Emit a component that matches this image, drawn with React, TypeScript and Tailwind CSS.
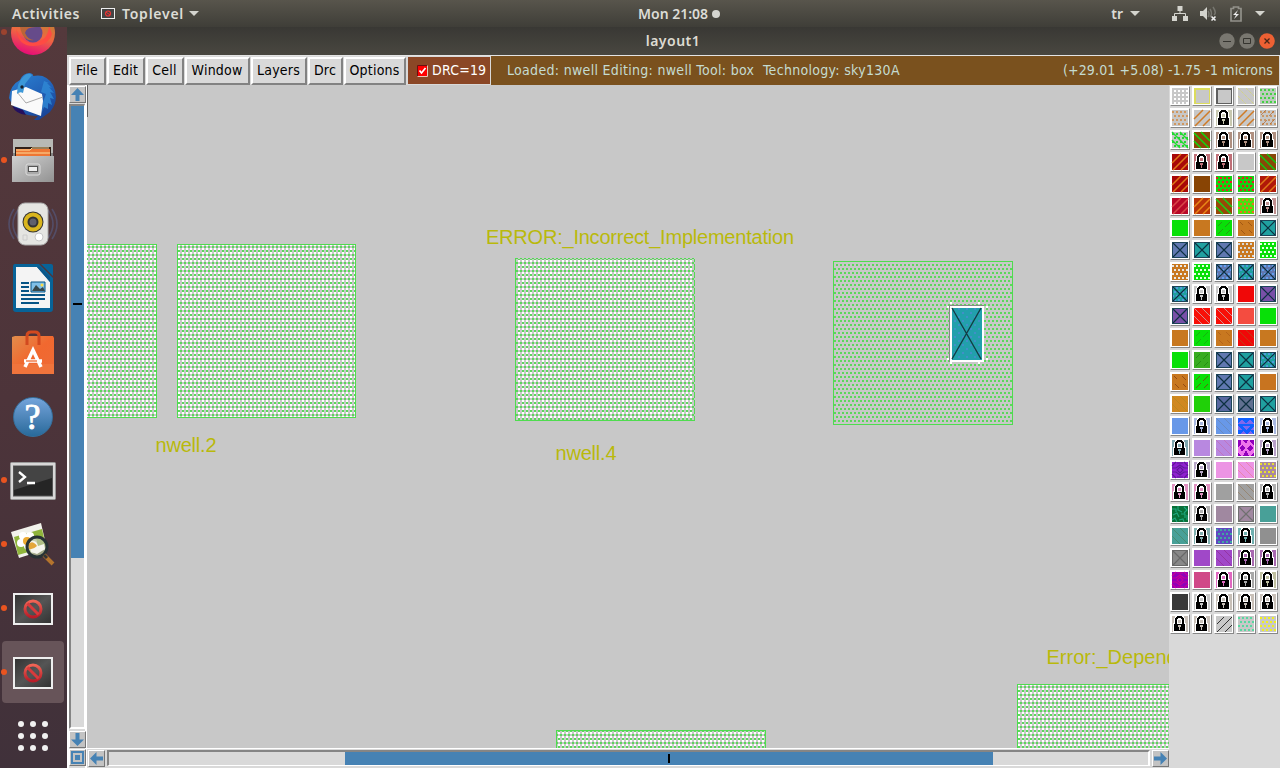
import React from 'react';

type Swatch = [kind: string, bg: string, fg?: string];

const G = '#c8c8c8', O = '#c87820', GR = '#08e008', BL = '#6078b0', TL = '#20a0a0', PU = '#7850a8';

const palette: Swatch[][] = [
  [['grid', G, '#fff'], ['outline', G, '#dcdc5c'], ['outline', G, '#606060'], ['faint', G, '#dcdc50'], ['dots', '#bccabc', '#44d044']],
  [['dots', G, '#d09860'], ['slash', G, '#cf7b27'], ['lock', '#c8c8b0'], ['slash', G, '#cf7b27'], ['dotslash', G, '#c89868']],
  [['dotback', G, '#20dc30'], ['back2', '#8c4808', '#10d810'], ['lock', '#b09080'], ['lock', '#b09080'], ['lock', '#b09080']],
  [['slash', '#a80808', '#e07818'], ['lock', '#c07078'], ['lock', '#c07078'], ['solid', G], ['back2', '#884808', '#10c810']],
  [['slash', '#a80808', '#e07818'], ['solid', '#884404'], ['dots', '#10d410', '#e82020'], ['dotslash', '#10d410', '#e02020'], ['slash', '#b01808', '#e07818']],
  [['slash', '#b80828', '#d84848'], ['slash', '#b83408', '#e88818'], ['back2', '#984808', '#18d018'], ['dots', '#48e010', '#e87020'], ['lock', '#c09090']],
  [['solid', GR], ['solid', O], ['dash', GR, '#308818'], ['dashback', O, '#985010'], ['cross', TL]],
  [['cross', BL], ['cross', TL], ['cross', BL], ['dots', O, '#d8d8d8'], ['dots', GR, '#e8ffe8']],
  [['dots', O, '#e8e8e8'], ['dots', GR, '#e0ffe0'], ['crossdots', BL, '#60a0f0'], ['crossdots', TL, '#509bdc'], ['crossdots', BL, '#60a0f0']],
  [['crossdots', TL, '#509bdc'], ['lock', G], ['lock', G], ['solid', '#f00808'], ['cross', PU]],
  [['cross', PU], ['back', '#f81008', '#c8b0b0'], ['back', '#f81008', '#c8b0b0'], ['solid', '#f44c40'], ['solid', GR]],
  [['solid', O], ['dash', GR, '#18a810'], ['dashback', O, '#b06018'], ['back', '#f00808', '#b84818'], ['solid', O]],
  [['solid', GR], ['dash', '#38ac20', '#208810'], ['cross', BL], ['cross', TL], ['crossdots', TL, '#509bdc']],
  [['dashback', O, '#884010'], ['dash', GR, '#784010'], ['cross', BL], ['cross', TL], ['solid', '#c87420']],
  [['back', '#d08820', '#b88820'], ['solid', '#20d008'], ['cross', '#5868a0'], ['cross', '#607090'], ['cross', TL]],
  [['solid', '#6898e8'], ['lock', '#a8b8e0'], ['back', '#6898e8', '#6888b8'], ['tri', '#1060ff', '#8068ec'], ['lock', '#a8b8e0']],
  [['lock', '#80a8b0'], ['solid', '#b888e0'], ['back', '#b888e0', '#c070b8'], ['tri2', '#f074ec', '#9000bc'], ['lock', '#b8a0c8']],
  [['mesh', '#9020d0', '#601898'], ['lock', '#b8a8c8'], ['solid', '#ec94e4'], ['back', '#ec94e4', '#e880a0'], ['dots', '#a888a0', '#e8e030']],
  [['lock', '#e090c0'], ['lock', '#e090c0'], ['solid', '#a0a0a0'], ['back', '#a0a0a0', '#948068'], ['lock', '#b0b0b0']],
  [['weave', '#087038', '#20a880'], ['lock', '#b0b0b0'], ['solid', '#a088a0'], ['crossgray', '#a088a0', '#707070'], ['solid', '#48a098']],
  [['back', '#48a098', '#488868'], ['lock', '#80b0b0'], ['dots', '#6048c0', '#40a8a0'], ['lock', '#70b0b0'], ['solid', '#909090']],
  [['crossgray', '#888888', '#686868'], ['solid', '#a048c8'], ['back', '#a048c8', '#903098'], ['lock', '#a868b0'], ['lock', '#a868b0']],
  [['mesh', '#9000b8', '#c80098'], ['solid', '#d04888'], ['lock', '#e068c0'], ['lock', '#a8a8a8'], ['lock', '#c0c0a0']],
  [['solid', '#383838'], ['lock', G], ['lock', '#c8c0b8'], ['lock', '#c8c0b8'], ['lock', '#c8c0b8']],
  [['lock', '#c8c0b8'], ['lock', '#c8c0b8'], ['thin', G, '#202020'], ['dots', G, '#58d8a0'], ['dots', G, '#f0f020']],
];

const dotCells: [number, number][] = [];
for (let r = 0; r < 4; r++) for (let c = 0; c < 4; c++) dotCells.push([c * 4 + (r % 2 ? 2 : 0), r * 4 + 1]);

function Dots({ fg }: { fg?: string }) {
  return <>{dotCells.map(([x, y]) => <rect key={`${x}-${y}`} x={x} y={y} width="2" height="2" fill={fg} />)}</>;
}

function Pattern({ kind, bg, fg }: { kind: string; bg: string; fg?: string }) {
  switch (kind) {
    case 'grid':
      return <>{[2, 6, 10, 14].map(y => [2, 6, 10, 14].map(x => <rect key={`${x}-${y}`} x={x} y={y} width="2" height="2" fill={fg} />))}</>;
    case 'outline':
      return <rect x=".75" y=".75" width="14.5" height="14.5" fill="none" stroke={fg} strokeWidth="1.5" />;
    case 'slash':
      return <path d="M0 9 9 0M1 16 16 1M9 16 16 9" stroke={fg} strokeWidth="1.5" shapeRendering="auto" />;
    case 'thin':
      return <path d="M1 8 8 1M1 16 16 1M9 16 16 9" stroke={fg} strokeWidth=".9" shapeRendering="auto" />;
    case 'back':
      return <path d="M8 0 16 8M0 0 16 16M0 8 8 16" stroke={fg} strokeWidth=".8" shapeRendering="auto" />;
    case 'faint':
      return <path d="M8 0 16 8M0 0 16 16M0 8 8 16" stroke={fg} strokeWidth=".8" strokeDasharray="1 1" shapeRendering="auto" />;
    case 'back2':
      return <path d="M7 0 16 9M0 1 15 16M0 9 7 16" stroke={fg} strokeWidth="1.5" shapeRendering="auto" />;
    case 'dash':
      return <path d="M2 6 6 2M9 7 14 2M2 14 7 9M10 14 14 10" stroke={fg} strokeWidth=".8" shapeRendering="auto" />;
    case 'dashback':
      return <path d="M2 2 5 5M10 2 14 6M3 10 7 14M11 10 14 13" stroke={fg} strokeWidth=".8" shapeRendering="auto" />;
    case 'dots':
      return <Dots fg={fg} />;
    case 'dotslash':
      return <><Dots fg={fg} /><path d="M1 5 6 0M9 6 14 1M2 15 7 10M10 14 15 9" stroke="#b05818" strokeWidth=".6" shapeRendering="auto" /></>;
    case 'dotback':
      return <><Dots fg={fg} /><path d="M0 0 16 16M8 0 16 8M0 8 8 16" stroke={fg} strokeWidth="1.4" shapeRendering="auto" /></>;
    case 'cross':
    case 'crossdots':
    case 'crossgray':
      return (
        <>
          {kind === 'crossdots' && <Dots fg={fg} />}
          <path d="M1 1 15 15M15 1 1 15" stroke={kind === 'crossgray' ? fg : '#0c3040'} strokeWidth="1.2" shapeRendering="auto" />
          <path d="M.5 .5h15v15H.5z" fill="none" stroke={kind === 'crossgray' ? fg : '#1c4458'} />
        </>
      );
    case 'tri':
      return <path d="M0 6 4 1 8 6zM8 6 12 1 16 6zM4 8h8l-4 4zM0 8l4 4H0zM16 8l-4 4h4zM2 16l3-3 3 3zM9 16l3-3 3 3z" fill={fg} />;
    case 'tri2':
      return <path d="M0 0h3v4L0 7zM5 0h5L8 4zM12 0h4v5l-3-2zM4 5l3 3-3 4-2-4zM12 5l3 3-3 4-3-4zM0 12l3 4H0zM8 10l3 6H5zM16 12v4h-3z" fill={fg} />;
    case 'mesh':
      return <path d="M0 4 4 0M12 0l4 4M5 1h6M0 6h4l4-3 4 3h4M8 5l3 3-3 3-3-3zM0 10h4l4 3 4-3h4M0 12l4 4M16 12l-4 4M5 15h6" fill="none" stroke={fg} strokeWidth="1.1" shapeRendering="auto" />;
    case 'weave':
      return <path d="M0 3h4v3M6 0v4l4 2M12 1l3 3-3 3M1 9l4-2 2 4M9 8h4v4M0 14l3-2 2 4M7 14l4-1 1 3M15 9v5" fill="none" stroke={fg} strokeWidth="1.1" shapeRendering="auto" />;
    case 'lock':
      return (
        <>
          <path d="M2 7V2H3V0H5V-1H10V0H12V2H13V7H14V16H1V7z" fill="#fff" />
          <path d="M5 0H10V1H11V2H12V8H10V3H9V2H6V3H5V8H3V2H4V1H5z" fill="#000" />
          <path d="M6 4H9V7H6z" fill={bg} />
          <rect x="2" y="8" width="11" height="7" fill="#000" />
          <path d="M6 9h3v2H8v3H7v-3H6z" fill={bg} />
        </>
      );
    default:
      return null;
  }
}

function PaletteCell({ item }: { item: Swatch }) {
  const [kind, bg, fg] = item;
  return (
    <div className="h-[20px] w-[20px] border border-white border-r-[#888] border-b-[#888] bg-white p-px">
      <svg width="16" height="16" viewBox="0 0 16 16" className="block overflow-visible" shapeRendering="crispEdges">
        <rect width="16" height="16" fill={bg} />
        <Pattern kind={kind} bg={bg} fg={fg} />
      </svg>
    </div>
  );
}

const menus: [string, string][] = [
  ['File', 'w-[37px]'], ['Edit', 'w-[38px]'], ['Cell', 'w-[38px]'], ['Window', 'w-[65px]'],
  ['Layers', 'w-[56px]'], ['Drc', 'w-[35px]'], ['Options', 'w-[62px]'],
];

function MenuBar() {
  return (
    <div className="flex h-[30px] shrink-0 border-t border-[#e4e4e4] bg-[#d9d9d9] pl-[2px] pr-px font-['DejaVu_Sans_Condensed','DejaVu_Sans',sans-serif] text-[14px] font-stretch-condensed whitespace-pre">
      <div className="flex gap-px pr-px pt-px">
        {menus.map(([label, w]) => (
          <button key={label} className={`${w} flex h-[28px] justify-center border-2 border-white border-r-[#828282] border-b-[#828282] bg-[#d9d9d9] pr-px leading-[22px] tracking-[0.2px] text-black`}>{label}</button>
        ))}
      </div>
      <div className="flex w-[84px] shrink-0 items-center border border-[#d9d9d9] bg-[#8b4726] pl-[9px] text-white">
        <svg width="11" height="12" viewBox="0 0 11 12" className="mr-[4px] shrink-0">
          <path d="M.5 11.5V.5h10" fill="none" stroke="#6c1010" /><path d="M1 1h9v10H1z" fill="#f00" />
          <path d="M10.5 .5v11H.5" fill="none" stroke="#e8c8b8" /><path d="m2.5 5.5 2 2.5 4-5" fill="none" stroke="#fff" strokeWidth="1.7" />
        </svg>
        <span className="tracking-[0.2px]">DRC=19</span>
      </div>
      <div className="flex flex-1 items-center justify-between bg-[#7a511e] pl-[16px] pr-[6px] text-[#c5dcd1]">
        <span className="tracking-[0.31px]">Loaded: nwell Editing: nwell Tool: box  Technology: sky130A</span>
        <span className="tracking-[0.13px]">(+29.01 +5.08) -1.75 -1 microns</span>
      </div>
    </div>
  );
}

function ScrollButton({ d }: { d: string }) {
  return (
    <div className="h-[17px] w-[17px] shrink-0 border border-white border-r-[#777] border-b-[#777] bg-[#c3c3c3]">
      <svg width="15" height="15" viewBox="0 0 15 15"><path d={d} fill="#4682b4" fillRule="evenodd" /></svg>
    </div>
  );
}

const UP = 'M7.5 1 14 8H9.5v6h-4V8H1z';
const DOWN = 'M7.5 14 1 7.5h4.5V1h4v6.5H14z';
const LEFT = 'M1 7.5 7.5 1v4.5H14v4H7.5V14z';
const RIGHT = 'M14 7.5 7.5 1v4.5H1v4h6.5V14z';
const HOME = 'M1 1h13v13H1zM3 3v9h9V3zM5 5h5v5H5z';

function Viewport() {
  const label = { fill: '#b9b90b', fontSize: 20, fontFamily: '"Liberation Sans", Arial, sans-serif' };
  return (
    <svg width="1082" height="663" viewBox="87 85 1082 663" className="block bg-[#c8c8c8]">
      <defs>
        <pattern id="well" width="4" height="8" x="2" y="0" patternUnits="userSpaceOnUse">
          <path d="M0 0h2v2H0zM0 4h2v2H0z" fill="#fff" />
          <path d="M0 2h2v2H0zM2 6h2v2H2z" fill="#5bd75b" />
        </pattern>
        <pattern id="diff" width="4" height="8" x="0" y="0" patternUnits="userSpaceOnUse">
          <path d="M0 0h2v2H0zM2 4h2v2H2z" fill="#5bd75b" />
        </pattern>
        <pattern id="metal" width="8" height="8" x="2" y="0" patternUnits="userSpaceOnUse">
          <path d="M0 0h2v2H0zM4 4h2v2H4z" fill="#4090c8" />
        </pattern>
      </defs>
      <g stroke="#4fdc4f" shapeRendering="crispEdges">
        <rect x="70.5" y="244.5" width="86" height="173" fill="url(#well)" />
        <rect x="177.5" y="244.5" width="178" height="173" fill="url(#well)" />
        <rect x="515.5" y="258.5" width="179" height="162" fill="url(#well)" strokeDasharray="2 2" />
        <path d="M515.5 258V421M515 420.5H695" />
        <rect x="556.5" y="730.5" width="209" height="40" fill="url(#well)" />
        <rect x="1017.5" y="684.5" width="190" height="90" fill="url(#well)" />
        <rect x="833.5" y="261.5" width="179" height="163" fill="url(#diff)" />
      </g>
      <path d="M87.5 85v32" stroke="#606060" />
      <g shapeRendering="crispEdges">
        <path d="M949.5 362V305.5H984" fill="none" stroke="#888" />
        <rect x="951" y="307" width="32" height="54" fill="#22a0ac" stroke="#fff" strokeWidth="2" />
        <rect x="952" y="308" width="30" height="52" fill="url(#metal)" />
        <path d="M950 303h2M978 303h2M947 307h2M986 307h2M947 359h2M986 359h2M950 363h2M978 363h2" stroke="#fff" strokeWidth="2" />
      </g>
      <path d="m952 308 29 51M981 308l-29 51" stroke="#123e44" strokeWidth="1.4" />
      <text x="486" y="243.5" textLength="308" {...label}>ERROR:_Incorrect_Implementation</text>
      <text x="155.5" y="452" textLength="61" {...label}>nwell.2</text>
      <text x="555.5" y="460" textLength="61" {...label}>nwell.4</text>
      <text x="1046.5" y="664" {...label}>Error:_Depend</text>
    </svg>
  );
}

function Prohibited() {
  return (
    <svg width="42" height="34" viewBox="0 0 42 34">
      <defs>
        <linearGradient id="panel" x2="1" y2="1"><stop stopColor="#333" /><stop offset=".5" stopColor="#555" /><stop offset="1" stopColor="#333" /></linearGradient>
        <linearGradient id="ban" x2="0" y2="1"><stop stopColor="#f06455" /><stop offset="1" stopColor="#b81c28" /></linearGradient>
      </defs>
      <rect x="1" y="1" width="40" height="32" fill="#eee" /><rect x="3" y="3" width="36" height="28" fill="url(#panel)" />
      <circle cx="21" cy="17" r="8" fill="none" stroke="url(#ban)" strokeWidth="3" /><path d="m15.5 11.5 11 11" stroke="#d83a3c" strokeWidth="3" />
    </svg>
  );
}

const Firefox = () => (
  <svg width="48" height="48" viewBox="0 0 48 48">
    <defs><linearGradient id="fox" x1=".7" x2=".4" y2="1"><stop stopColor="#a58a30" /><stop offset=".55" stopColor="#ef6840" /><stop offset="1" stopColor="#e60b78" /></linearGradient></defs>
    <circle cx="24" cy="24" r="22" fill="url(#fox)" /><path d="M7 20q6 15 18 14 14-2 15-17l3 8q-4 12-19 12Q9 37 7 20" fill="#ff4b43" /><circle cx="24" cy="24" r="9.5" fill="#664b8a" /><path d="M11 18q8-5 16 0-10 0-11 6 3 7 9 7-11 2-14-13" fill="#ba6538" />
  </svg>
);
const Thunderbird = () => (
  <svg width="50" height="50" viewBox="0 0 50 50">
    <defs><linearGradient id="bird" x1=".2" x2=".8" y2="1"><stop stopColor="#2a7fd0" /><stop offset=".5" stopColor="#2262b8" /><stop offset="1" stopColor="#173f92" /></linearGradient></defs>
    <path d="M1 26Q2 13 12 8 15 1 22 1 26 2 25 4 38 1 45 13 52 28 42 40L31 48l-5 0 4-4Q8 44 1 26" fill="url(#bird)" />
    <path d="M36 9l5 2-2 0 5 5-3-1 5 6-4-1 4 7-4-1 2 7-4-2 0 6-4-2-2 5 1-10 3-8-5-2z" fill="#2f8ad6" opacity=".8" />
    <path d="M4 19 18 15l16 7 1 7-2 15L3 33z" fill="#fafafa" /><path d="m9 20 9 11 17-6" fill="none" stroke="#aaa" />
    <path d="M9 22q0-12 7-18Q20 0 24 3L17 12l-2 9q-3-2-6 1" fill="#3c98d8" /><circle cx="14" cy="15" r="1.7" fill="#18202c" />
    <path d="M4 34 15 38l3 5Q8 42 4 34" fill="#24105e" />
  </svg>
);
const Files = () => (
  <svg width="44" height="46" viewBox="0 0 44 46">
    <defs><linearGradient id="cab" x2="1" y2="1"><stop stopColor="#d0d0d0" /><stop offset="1" stopColor="#929292" /></linearGradient></defs>
    <path d="M2 2h40v41H2z" fill="#858585" /><path d="M2 1h40v14H2z" fill="#b8b9b5" /><path d="M4 9h36v10H4z" fill="#302018" /><path d="M5 11h34v8H5z" fill="#ee7634" /><path d="M5 12h14l2-2h17M5 15h34" stroke="#ffdc99" fill="none" /><path d="M1 18h42v26H1z" fill="url(#cab)" />
    <rect x="15" y="26" width="14" height="11" rx="2" fill="#aaa" stroke="#ddd" /><rect x="17.5" y="28.5" width="9" height="5" fill="#eee" stroke="#555" />
  </svg>
);
const Rhythmbox = () => (
  <svg width="50" height="48" viewBox="0 0 50 48">
    <path d="M10 10Q0 24 10 38M6 9Q-4 24 6 39M40 10q10 14 0 28M44 9q10 15 0 30" fill="none" stroke="#56618d" strokeWidth="1.6" opacity=".55" />
    <rect x="10" y="3" width="30" height="42" rx="7" fill="#e5e5e2" stroke="#aaa" /><circle cx="25" cy="22" r="10.5" fill="#333" /><circle cx="25" cy="22" r="7.5" fill="none" stroke="#d9b51d" strokeWidth="4" /><circle cx="25" cy="22" r="3.5" fill="#5f606c" /><circle cx="31" cy="37" r="4" fill="#fff" stroke="#c8c8c8" /><path d="M15 35h4v5h-4z" fill="none" stroke="#ccc" />
  </svg>
);
const Writer = () => (
  <svg width="42" height="50" viewBox="0 0 42 50">
    <path d="M3 1h24l14 14v31q0 3-3 3H4q-3 0-3-3V4q0-3 2-3M29 1h10q2 0 2 2v10z" fill="#076398" /><path d="M4 4h21l13 15v26H4z" fill="#f4f4f4" /><path d="M25 4 38 19V14L28 4z" fill="#0b578a" />
    <path d="M9 20h8M9 24h8M9 28h8M9 32h24M9 36h24M9 40h18" stroke="#075485" strokeWidth="2" /><path d="M19 19h14v10H19z" fill="#80c0e8" stroke="#075485" /><path d="m20 28 4-6 4 4 3-2 2 4" fill="#37474a" /><circle cx="30" cy="22" r="1.5" fill="#fbdc46" />
  </svg>
);
const Software = () => (
  <svg width="44" height="46" viewBox="0 0 44 46">
    <defs><linearGradient id="bag" x2="1" y2="1"><stop stopColor="#e28d4c" /><stop offset=".5" stopColor="#f1682f" /><stop offset="1" stopColor="#ee6b37" /></linearGradient></defs>
    <path d="m1 7 3-1h38l1 2v36H1z" fill="url(#bag)" /><path d="M1 34h42v10H1z" fill="#f0743c" /><path d="M16 15V6q0-4 4-4h4q4 0 4 4v9" fill="none" stroke="#d2491f" strokeWidth="3" />
    <path d="m14 37 8-17 8 17M13 31h18" fill="none" stroke="#fff" strokeWidth="3.5" /><path d="M15 31h11" stroke="#ef6a30" strokeWidth="1.3" />
  </svg>
);
const Help = () => (
  <div className="flex h-10 w-10 items-center justify-center rounded-full border border-[#356f9c] bg-linear-to-b from-[#74a4db] to-[#286a9b] font-['Liberation_Serif',serif] text-[36px] font-normal leading-none text-white [-webkit-text-stroke:0.8px_white]">?</div>
);
const Terminal = () => (
  <svg width="46" height="38" viewBox="0 0 46 38">
    <rect x=".5" y=".5" width="45" height="37" rx="1" fill="#d8d8d8" stroke="#999" /><rect x="3.5" y="4" width="39" height="30" fill="#252525" stroke="#555" /><path d="M4 4h38v12L4 28z" fill="#444" /><path d="m9 10 6 5-6 5M17 21h8" fill="none" stroke="#fff" strokeWidth="2.3" />
  </svg>
);
const ImageViewer = () => (
  <svg width="46" height="46" viewBox="0 0 46 46">
    <path d="M1 10 31 1l6 26L9 36z" fill="#f2f2ec" /><path d="m4 15 28-8 4 18-28 8z" fill="#8fb53b" />
    <g fill="#fff"><circle cx="13" cy="14" r="4" /><circle cx="20" cy="14" r="4" /><circle cx="23" cy="20" r="4" /><circle cx="18" cy="24" r="4" /><circle cx="11" cy="21" r="4" /></g><circle cx="17" cy="19" r="4" fill="#edaa30" />
    <circle cx="27" cy="25" r="10" fill="#b6c29a" opacity=".8" /><path d="M19 24q0-5 4-5t5 5l6-2 1 5-8 5-6-2z" fill="#f5f5ee" /><path d="M18 23q4-6 9 1-4 4-8 3z" fill="#e3a63a" /><circle cx="27" cy="25" r="10" fill="none" stroke="#273235" strokeWidth="3" /><path d="m34 33 9 9" stroke="#b4742d" strokeWidth="4" /><path d="m34 33 3 3" stroke="#333" strokeWidth="3" />
  </svg>
);
const Apps = () => (
  <div className="grid grid-cols-3 gap-[6px]">{[...Array(9)].map((_, i) => <i key={i} className="h-[6px] w-[6px] rounded-full bg-[#f1f1f1]" />)}</div>
);

const launchers: [React.FC, boolean][] = [
  [Firefox, true], [Thunderbird, false], [Files, true], [Rhythmbox, false], [Writer, false], [Software, false],
  [Help, false], [Terminal, true], [ImageViewer, true], [Prohibited, true], [Prohibited, true], [Apps, false],
];

function Dock() {
  return (
    <aside className="flex w-[67px] shrink-0 flex-col justify-end overflow-hidden bg-linear-to-b from-[#54393c] via-[#4d343a] to-[#40313a]">
      {launchers.map(([Icon, running], i) => (
        <div key={i} className="flex h-[64px] shrink-0 items-center pl-[2px] pr-[3px]">
          <div className={`flex h-[62px] w-full items-center rounded-[4px] ${i === 10 ? 'bg-[#675459]' : ''}`}>
            <i className={`-ml-px h-[6px] w-[6px] shrink-0 rounded-full ${running ? (i === 0 ? 'bg-[#9b432f]' : 'bg-[#e95420]') : ''}`} />
            <div className={`flex flex-1 items-center justify-center pr-[6px] ${i === 3 || i === 4 || i === 11 ? '' : 'pt-[2px]'}`}><Icon /></div>
          </div>
        </div>
      ))}
    </aside>
  );
}

const Caret = () => <svg width="10" height="5" viewBox="0 0 10 5"><path d="M0 0h10L5 5z" fill="#d4d4ce" /></svg>;

function TopBar() {
  return (
    <header className="grid h-[27px] shrink-0 grid-cols-[638px_auto_1fr] items-center bg-linear-to-b from-[#58554c] to-[#3f3e38] font-['Noto_Sans','Open_Sans',sans-serif] text-[14px] font-semibold leading-none text-[#dcdcd6]">
      <div className="flex items-center pl-[12px]">
        <span className="w-[89px] whitespace-nowrap tracking-[0.55px]">Activities</span>
        <svg width="14" height="11" viewBox="0 0 14 11" className="mr-[7px]"><rect x=".5" y=".5" width="13" height="10" fill="#444" stroke="#eee" /><circle cx="7" cy="5.5" r="2.5" fill="none" stroke="#e33" strokeWidth="1.2" /><path d="m5 4 4 3" stroke="#e33" /></svg>
        <span className="mr-[5px] tracking-[0.75px]">Toplevel</span><Caret />
      </div>
      <div className="flex items-center gap-[4px]"><span>Mon 21:08</span><i className="h-[8px] w-[8px] rounded-full bg-[#d5d5d0]" /></div>
      <div className="flex items-center justify-end pr-[15px]">
        <span className="mr-[7px]">tr</span><Caret />
        <svg width="16" height="16" viewBox="0 0 16 16" className="ml-[32px] mr-[12px]"><path d="M5.5 0h5v5h-5zM0 10h5v5H0zM11 10h5v5h-5z" fill="#d4d4ce" /><path d="M8 5v3M2.5 10V7.5h11V10" fill="none" stroke="#d4d4ce" /></svg>
        <svg width="17" height="16" viewBox="0 0 17 16" className="mr-[13px]"><path d="M0 5h3l4-4v13l-4-4H0z" fill="#d4d4ce" /><path d="M8 5q2 3 0 6M10 3q3 5 0 8M13 1q4 6 1 8" fill="none" stroke="#77766f" strokeWidth="1.5" /><path d="m11.5 10.5 4 4m0-4-4 4" stroke="#eee" strokeWidth="1.6" /></svg>
        <svg width="12" height="16" viewBox="0 0 12 16" className="mr-[13px]"><path d="M1 2.5h2.5V1h5v1.5H11V15H1z" fill="none" stroke="#92918a" strokeWidth="1.7" /><path d="M8 4 3 9h3l-2 4 5-5H6z" fill="#eee" /></svg>
        <Caret />
      </div>
    </header>
  );
}

function TitleBar() {
  return (
    <div className="grid h-[28px] shrink-0 grid-cols-[1fr_auto_1fr] items-center bg-linear-to-b from-[#393834] to-[#494740] pr-[5px] pl-[4px] font-['Noto_Sans','Open_Sans',sans-serif] text-[14px] font-semibold leading-none text-[#dedbd2]">
      <span /><span className="tracking-[0.5px]">layout1</span>
      <div className="flex justify-end gap-[4px]">
        <svg width="16" height="16" viewBox="0 0 16 16"><circle cx="8" cy="8" r="7.7" fill="#797770" /><path d="M4 8.5h8" stroke="#35342f" /></svg>
        <svg width="16" height="16" viewBox="0 0 16 16"><circle cx="8" cy="8" r="7.7" fill="#797770" /><path d="M4.5 5.5h7v5h-7z" fill="none" stroke="#35342f" /></svg>
        <svg width="16" height="16" viewBox="0 0 16 16"><circle cx="8" cy="8" r="7.8" fill="#ed6033" /><path d="m5.5 5.5 5 5m0-5-5 5" stroke="#4a2617" strokeWidth="1.3" /></svg>
      </div>
    </div>
  );
}

export default function App() {
  return (
    <div className="flex h-[768px] w-[1280px] flex-col overflow-hidden bg-[#d9d9d9]">
      <TopBar />
      <div className="flex min-h-0 flex-1">
        <Dock />
        <main className="flex w-[1213px] flex-col">
          <TitleBar />
          <MenuBar />
          <div className="flex min-h-0 flex-1">
            <div className="flex w-[20px] shrink-0 flex-col items-start border-x-2 border-white bg-[#d9d9d9] pt-px">
              <ScrollButton d={UP} />
              <div className="mt-px flex h-[625px] w-[16px] flex-col border-2 border-r border-[#858585] border-r-white border-b-white bg-[#d9d9d9]">
                <div className="flex h-[452px] items-center justify-center bg-[#4682b4] pb-[56px]"><i className="h-[2px] w-[9px] bg-black" /></div>
              </div>
              <div className="mt-[2px]"><ScrollButton d={DOWN} /></div>
              <div className="mt-px"><ScrollButton d={HOME} /></div>
            </div>
            <div className="flex w-[1082px] shrink-0 flex-col">
              <Viewport />
              <div className="flex h-[19px] items-center border-t border-white bg-[#d9d9d9] pl-px">
                <ScrollButton d={LEFT} />
                <div className="ml-[2px] flex h-[16px] w-[1043px] border-2 border-[#858585] border-r-white border-b border-b-white pl-[236px]">
                  <div className="flex w-[648px] items-center justify-center bg-[#4682b4]"><i className="h-[9px] w-[2px] bg-black" /></div>
                </div>
                <div className="ml-[2px]"><ScrollButton d={RIGHT} /></div>
              </div>
            </div>
            <div className="grid grid-cols-[repeat(5,20px)] content-start gap-[2px] bg-[#d9d9d9] pl-px pt-px">
              {palette.flat().map((item, i) => <PaletteCell key={i} item={item} />)}
            </div>
          </div>
        </main>
      </div>
    </div>
  );
}
